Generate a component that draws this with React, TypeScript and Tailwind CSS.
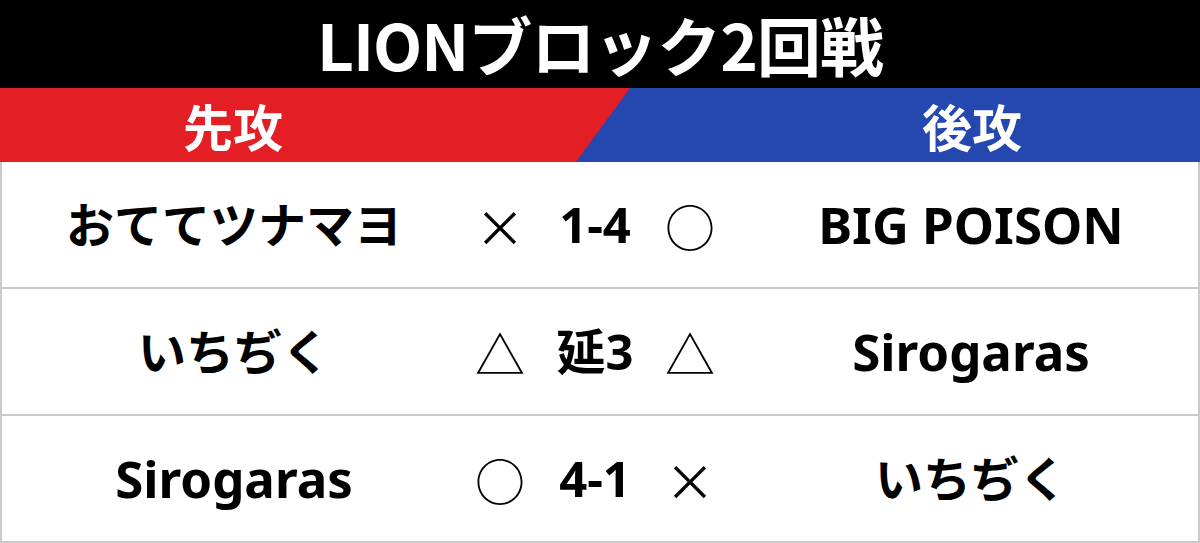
const rows = [
  { home: "おててツナマヨ", left: "×", score: "1-4", right: "○", away: "BIG POISON" },
  { home: "いちぢく", left: "△", score: "延3", right: "△", away: "Sirogaras" },
  { home: "Sirogaras", left: "○", score: "4-1", right: "×", away: "いちぢく" },
];

const font = { fontFamily: '"Noto Sans", "Noto Sans CJK JP", sans-serif' };
const cjk = { fontFamily: '"Noto Sans CJK JP", sans-serif' };

// latin team names run a bit larger than the kana ones
const isLatin = (s: string) => /^[A-Za-z ]+$/.test(s);

function Team({ name }: { name: string }) {
  return (
    <div className={`text-center font-bold leading-[1.2] ${isLatin(name) ? "text-[51px]" : "text-[48px]"}`}>
      {name}
    </div>
  );
}

export default function App() {
  return (
    <div className="w-[1200px] h-[543px] bg-white text-black" style={font}>
      {/* title */}
      <div className="h-[88px] bg-black flex items-center justify-center">
        <h1 className="text-white font-bold text-[64px] leading-[1.25] tracking-[-1px] -mt-[3px]" style={cjk}>
          LIONブロック2回戦
        </h1>
      </div>

      {/* 先攻 / 後攻 */}
      <div className="h-[74px] flex bg-[#2547b0]">
        <div className="w-[630px] h-full bg-[#e31e24] [clip-path:polygon(0_0,100%_0,576px_100%,0_100%)]">
          <div className="w-[466px] h-full flex items-center justify-center text-white font-bold text-[50px] leading-[1.2]" style={cjk}>
            先攻
          </div>
        </div>
        <div className="flex-1 flex justify-end">
          <div className="w-[456px] h-full flex items-center justify-center text-white font-bold text-[50px] leading-[1.2]" style={cjk}>
            後攻
          </div>
        </div>
      </div>

      {/* results */}
      <div className="border-x-2 border-[#cacaca]">
        {rows.map((r, i) => (
          <div key={i} className="h-[127px] border-b-2 border-[#cacaca] grid grid-cols-[464px_1fr_454px] items-center">
            <Team name={r.home} />
            <div className="grid grid-cols-[50px_1fr_50px] pl-[9px] pr-[29px] items-center">
              <span className="text-center text-[50px] font-normal leading-[1.2]" style={cjk}>{r.left}</span>
              <span className="text-center font-bold text-[49px] leading-[1.2]">{r.score}</span>
              <span className="text-center text-[50px] font-normal leading-[1.2]" style={cjk}>{r.right}</span>
            </div>
            <Team name={r.away} />
          </div>
        ))}
      </div>
    </div>
  );
}
